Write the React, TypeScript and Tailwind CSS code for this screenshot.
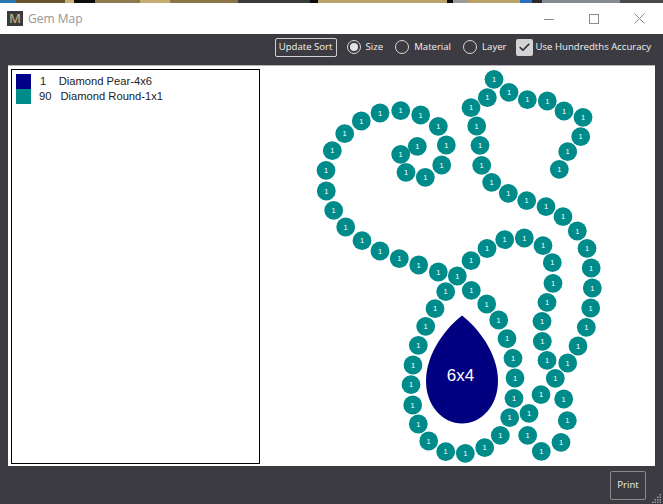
import { Check } from "lucide-react";

// gem centres, read off the reference, in window coordinates
const GEMS: [number, number][] = [
  [418.7, 265], [399.3, 258.7], [380, 251], [362, 240.7], [345.7, 227], [333.7, 210.3], [326.3, 191], [326, 170.3],
  [332.3, 150.7], [344.7, 133.7], [361.3, 121], [380, 113], [400.7, 110.7], [420.7, 115], [438.3, 126.3], [446.3, 145],
  [441.7, 165], [425.3, 177.3], [406, 172.3], [400.7, 154.3], [417.3, 146.3],
  [438.3, 272], [457.3, 276], [471, 260.7], [487, 248.5], [504.7, 239.7], [524.3, 238], [543, 245.7], [552.3, 262.7],
  [553, 283.3], [547, 302.3], [542, 321.3], [542.3, 341.3], [547, 360.3], [555.3, 378.3], [541, 394.7], [529, 413.3],
  [527.7, 435.3], [541.3, 451.3], [561, 442.3], [567.3, 420.7], [563.7, 399], [567.7, 363], [578, 346], [586.3, 327.3],
  [590.7, 308], [592.3, 288], [591.2, 268], [587, 248.3], [577.3, 231], [563, 216.7], [546, 206.7], [526.7, 200.7],
  [508.3, 193.3], [491.7, 182.3], [481.7, 165.3], [480, 145.3], [476.7, 126], [471, 107.7], [487.3, 97.7], [494, 79.3],
  [509, 92.3], [527.3, 99.7], [547.3, 101], [564, 111], [583, 117.3], [580.7, 136.7], [567.7, 151.7], [559.3, 169.3],
  [445.7, 291.7], [435, 308.7], [425.7, 326.3], [418.3, 345.3], [413, 365], [411, 384.7], [412.7, 405], [418.3, 424],
  [428.7, 441], [445.7, 451.7], [465.3, 453.3], [484.7, 447.7], [500.3, 435.3], [509.7, 417.7], [514, 398.3], [515, 378],
  [513, 358.3], [507, 338.7], [498.7, 320], [486.7, 304], [471.3, 290.3],
];

// what shows of the desktop above the window: [width, colour]
const STRIP: [number, string][] = [
  [16, "#2a7ab0"], [49, "#6b5230"], [9, "#c9b070"], [21, "#0c0c0c"], [45, "#8f7a50"], [30, "#c4ac72"],
  [68, "#8a7448"], [72, "#3a3a3a"], [8, "#0c0c0c"], [129, "#b8a268"], [6, "#0c0c0c"], [15, "#9a9a9a"],
  [52, "#b8a268"], [12, "#2a6fc0"], [10, "#2a2a2a"], [78, "#868b92"], [43, "#4a4a4a"],
];

function Radio({ label, checked }: { label: string; checked?: boolean }) {
  return (
    <div className="flex items-center gap-[5px]">
      <span className="flex h-[14px] w-[14px] items-center justify-center rounded-full border border-[#d8d8d8]">
        {checked ? <span className="h-[8px] w-[8px] rounded-full bg-[#e4e4e4]" /> : null}
      </span>
      <span>{label}</span>
    </div>
  );
}

export default function App() {
  return (
    <div className="flex h-[504px] w-[663px] flex-col overflow-hidden bg-[#3b3b41] font-['Open_Sans',sans-serif]">
      <div className="flex h-[3px] shrink-0">
        {STRIP.map(([w, c], i) => (
          <div key={i} style={{ width: w, background: c }} />
        ))}
      </div>

      <div className="flex h-[31px] shrink-0 items-center bg-white pl-[7px]">
        <div className="flex h-[15px] w-[16px] items-center justify-center bg-[#3b3b3f] text-[13px] font-semibold leading-none text-[#bfa878]">
          M
        </div>
        <span className="ml-[5px] text-[12px] text-[#969696]">Gem Map</span>
        <div className="ml-auto flex items-center gap-[35px] pr-[18px]">
          <svg width="10" height="10" viewBox="0 0 10 10" fill="none" stroke="#8c8c8c" strokeWidth="1">
            <path d="M0 5.5H10" />
          </svg>
          <svg width="10" height="10" viewBox="0 0 10 10" fill="none" stroke="#8c8c8c" strokeWidth="1">
            <rect x="0.5" y="0.5" width="9" height="9" />
          </svg>
          <svg width="11" height="11" viewBox="0 0 11 11" fill="none" stroke="#8c8c8c" strokeWidth="1">
            <path d="M0.5 0.5L10.5 10.5M10.5 0.5L0.5 10.5" />
          </svg>
        </div>
      </div>

      <div className="flex h-[31px] shrink-0 items-center justify-end gap-[12px] pb-[4px] pr-[12px] text-[9.6px] text-[#f2f2f2]">
        <button type="button" className="mr-[-2px] h-[19px] w-[62px] rounded-[2px] border border-[#d0d0d0]">
          Update Sort
        </button>
        <Radio label="Size" checked />
        <Radio label="Material" />
        <Radio label="Layer" />
        <div className="ml-[-3px] flex items-center gap-[3px]">
          <span className="flex h-[17px] w-[17px] items-center justify-center rounded-[2px] bg-[#d4d4d4] text-[#2a2a2e]">
            <Check size={13} strokeWidth={3} />
          </span>
          <span>Use Hundredths Accuracy</span>
        </div>
      </div>

      <div className="mx-[8px] flex h-[401px] shrink-0 border-t border-[#b5b5b5] bg-white pl-[3px] pt-[3px]">
        <div className="h-[395px] w-[249px] shrink-0 border border-black p-[4px] font-['Liberation_Sans',sans-serif] text-[11.2px] leading-none text-[#222]">
          <div className="flex h-[15px] items-center">
            <span className="h-[15px] w-[15px] bg-[#00008b]" />
            <span className="ml-[9px]">1</span>
            <span className="ml-[12.5px]">Diamond Pear-4x6</span>
          </div>
          <div className="flex h-[15px] items-center">
            <span className="h-[15px] w-[15px] bg-[#008b8b]" />
            <span className="ml-[8px]">90</span>
            <span className="ml-[9px]">Diamond Round-1x1</span>
          </div>
        </div>
        <svg width="392" height="400" viewBox="260 66 392 400" className="-mt-[3px] shrink-0">
          {GEMS.map(([x, y], i) => (
            <g key={i}>
              <circle cx={x} cy={y} r="9.4" fill="#008b8b" />
              <text
                x={x}
                y={y + 2.6}
                textAnchor="middle"
                fontFamily="Liberation Sans, sans-serif"
                fontSize="7.5"
                fill="#ffffff"
              >
                1
              </text>
            </g>
          ))}
          <path
            d="M462 315.5C448 326 426 352 426 381C426 406 443 423.5 462 423.5C481 423.5 498 406 498 381C498 352 476 326 462 315.5Z"
            fill="#000080"
          />
          <text
            x="460.5"
            y="381"
            textAnchor="middle"
            fontFamily="Liberation Sans, sans-serif"
            fontSize="17"
            fill="#ffffff"
          >
            6x4
          </text>
        </svg>
      </div>

      <div className="relative flex flex-1 items-start justify-end pr-[17px] pt-[5px]">
        <button type="button" className="h-[29px] w-[36px] rounded-[2px] border border-[#8a8a8a] text-[9.6px] text-[#f2f2f2]">
          Print
        </button>
        <svg width="10" height="10" viewBox="0 0 10 10" className="absolute bottom-[1px] right-[1px]" fill="#9a9a9a">
          <rect x="7.5" y="1" width="1.5" height="1.5" />
          <rect x="5" y="3.5" width="1.5" height="1.5" />
          <rect x="7.5" y="3.5" width="1.5" height="1.5" />
          <rect x="2.5" y="6" width="1.5" height="1.5" />
          <rect x="5" y="6" width="1.5" height="1.5" />
          <rect x="7.5" y="6" width="1.5" height="1.5" />
          <rect x="0" y="8.5" width="1.5" height="1.5" />
          <rect x="2.5" y="8.5" width="1.5" height="1.5" />
          <rect x="5" y="8.5" width="1.5" height="1.5" />
          <rect x="7.5" y="8.5" width="1.5" height="1.5" />
        </svg>
      </div>
    </div>
  );
}
